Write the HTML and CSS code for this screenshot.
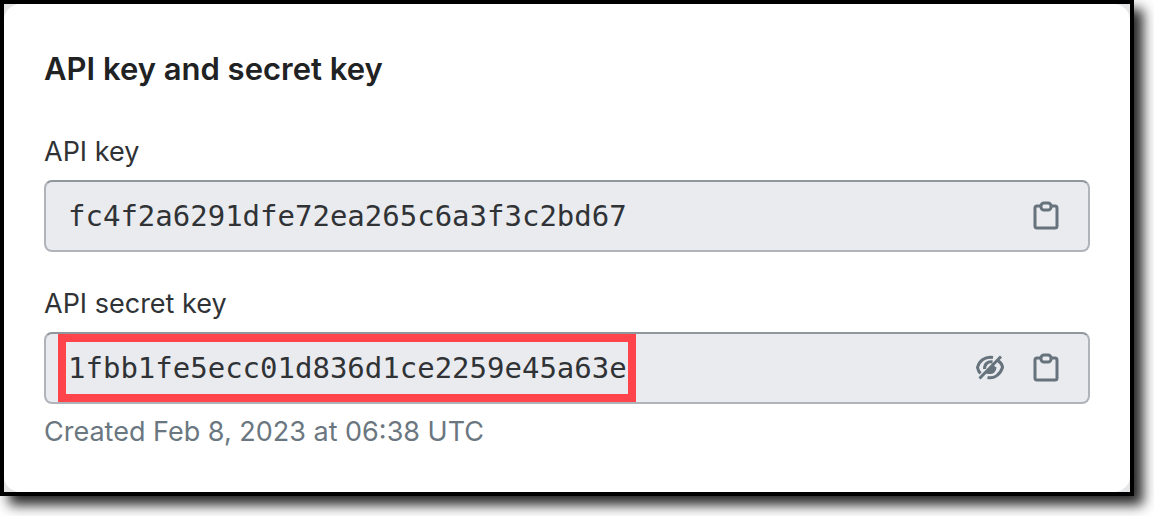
FILE: index.html
```html
<!DOCTYPE html>
<html lang="en">
<head>
<meta charset="utf-8">
<title>API key and secret key</title>
<link rel="stylesheet" href="styles.css">
</head>
<body>
<main class="frame">
  <section class="card">
    <h1 class="title">API key and secret key</h1>
    <div class="group">
      <label class="label" for="api-key">API key</label>
      <div class="field">
        <input class="value" id="api-key" type="text" readonly value="fc4f2a6291dfe72ea265c6a3f3c2bd67">
        <button class="icon-button" type="button" aria-label="Copy API key">
          <svg class="icon" viewBox="0 0 32 32" aria-hidden="true"><rect x="5" y="6" width="22" height="22" rx="2"/><rect class="clip" x="11" y="3" width="10" height="7" rx="3"/></svg>
        </button>
      </div>
    </div>
    <div class="group">
      <label class="label" for="api-secret">API secret key</label>
      <div class="field">
        <input class="value" id="api-secret" type="text" readonly value="1fbb1fe5ecc01d836d1ce2259e45a63e">
        <span class="highlight"></span>
        <button class="icon-button" type="button" aria-label="Hide API secret key">
          <svg class="icon" viewBox="0 0 32 32" aria-hidden="true"><path d="M19 5.500C11 4 5 9 3.500 15.500C4 18 5 20 6.500 21.500M24.500 9C27 11 28.500 13.500 28.500 15.500C26 23 20 27 13.500 25.500M27 4.500L5.500 26.500M18.500 10C14 9 10.500 12 10.500 17M21 15C21 19 18.500 21 15 20.500L21 14.500"/></svg>
        </button>
        <button class="icon-button" type="button" aria-label="Copy API secret key">
          <svg class="icon" viewBox="0 0 32 32" aria-hidden="true"><rect x="5" y="6" width="22" height="22" rx="2"/><rect class="clip" x="11" y="3" width="10" height="7" rx="3"/></svg>
        </button>
      </div>
      <p class="hint">Created Feb 8, 2023 at 06:38 UTC</p>
    </div>
  </section>
</main>
</body>
</html>
```
FILE: styles.css
```css
* { box-sizing: border-box; }

body {
  margin: 0;
  padding: 0 20px 20px 0;
  background: #fff;
  color: #202223;
  font-family: Inter, "Liberation Sans", sans-serif;
}

.frame {
  border: 4px solid #000;
  background: #e4e6e8;
  box-shadow: 9px 9px 12px rgba(0, 0, 0, 0.85);
}

.card {
  display: flex;
  flex-direction: column;
  gap: 32px;
  padding: 45px 40px 40px;
  border-radius: 16px;
  background: #fff;
}

.title {
  margin: 0 0 11px;
  font-size: 31px;
  font-weight: 600;
  line-height: 40px;
}

.group {
  display: flex;
  flex-direction: column;
}

.label {
  padding-bottom: 8px;
  color: #303336;
  font-size: 27px;
  line-height: 40px;
}

.field {
  position: relative;
  display: flex;
  align-items: center;
  gap: 24px;
  height: 72px;
  padding: 0 26px 0 22px;
  border: 2px solid #aeb4b9;
  border-top-color: #8f979c;
  border-radius: 8px;
  background: #eaebef;
}

.value {
  flex: 1;
  min-width: 0;
  padding: 0;
  border: 0;
  outline: 0;
  background: transparent;
  color: #303336;
  font-family: "DejaVu Sans Mono", monospace;
  font-size: 29px;
  line-height: 40px;
}

.highlight {
  position: absolute;
  top: 0;
  left: 12px;
  width: 578px;
  height: 68px;
  border: 8px solid #ff454b;
  pointer-events: none;
}

.icon-button {
  display: flex;
  padding: 0;
  border: 0;
  background: transparent;
  color: #66737d;
}

.icon {
  width: 32px;
  height: 32px;
  fill: none;
  stroke: currentColor;
  stroke-width: 3;
}

.clip { fill: #eaebef; }

.hint {
  margin: 8px 0 0;
  color: #6b7780;
  font-size: 27px;
  line-height: 40px;
}
```
